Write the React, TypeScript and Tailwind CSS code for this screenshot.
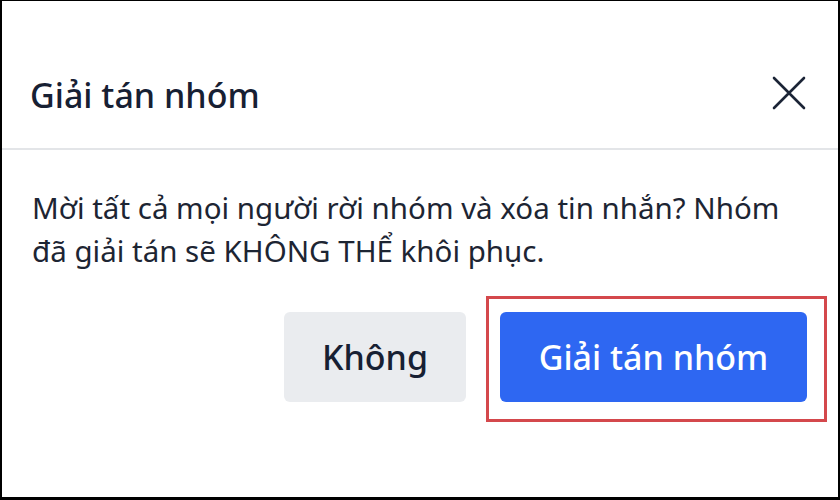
import React from 'react';

const font = { fontFamily: '"Noto Sans", "Open Sans", sans-serif' };

export default function App() {
  return (
    <div
      className="w-[840px] h-[500px] bg-white border-l-2 border-t border-r-2 border-b-[3px] border-black flex flex-col text-[#172033]"
      style={font}
    >
      {/* header */}
      <div className="h-[149px] flex items-end justify-between pl-[28px] pr-[32px] pb-[36px] border-b-2 border-[#e3e5e8]">
        <h1 className="text-[34px] font-medium leading-none">Giải tán nhóm</h1>
        <button className="w-[34px] h-[34px] flex items-center justify-center mb-[2px]">
          <svg width="34" height="34" viewBox="0 0 34 34" fill="none" stroke="#1b2436" strokeWidth="2.6" strokeLinecap="round">
            <path d="M2 2 L32 32 M32 2 L2 32" />
          </svg>
        </button>
      </div>

      {/* body */}
      <div className="px-[30px] pt-[36px]">
        <p className="text-[29.5px] leading-[43px] text-[#1d2533]">
          Mời tất cả mọi người rời nhóm và xóa tin nhắn? Nhóm đã giải tán sẽ KHÔNG THỂ khôi phục.
        </p>
      </div>

      <div className="flex justify-end gap-[34px] pr-[31px] pt-[40px]">
        <button className="w-[182px] h-[90px] rounded-[6px] bg-[#eaecef] text-[34px] font-medium text-[#172033]">
          Không
        </button>
        <span className="relative">
          <button className="w-[307px] h-[90px] rounded-[6px] bg-[#2e67f2] text-[34px] font-medium text-white">
            Giải tán nhóm
          </button>
          <span className="absolute -left-[14px] -right-[20px] -top-[16px] -bottom-[20px] border-[3px] border-[#d4484c] pointer-events-none" />
        </span>
      </div>
    </div>
  );
}
